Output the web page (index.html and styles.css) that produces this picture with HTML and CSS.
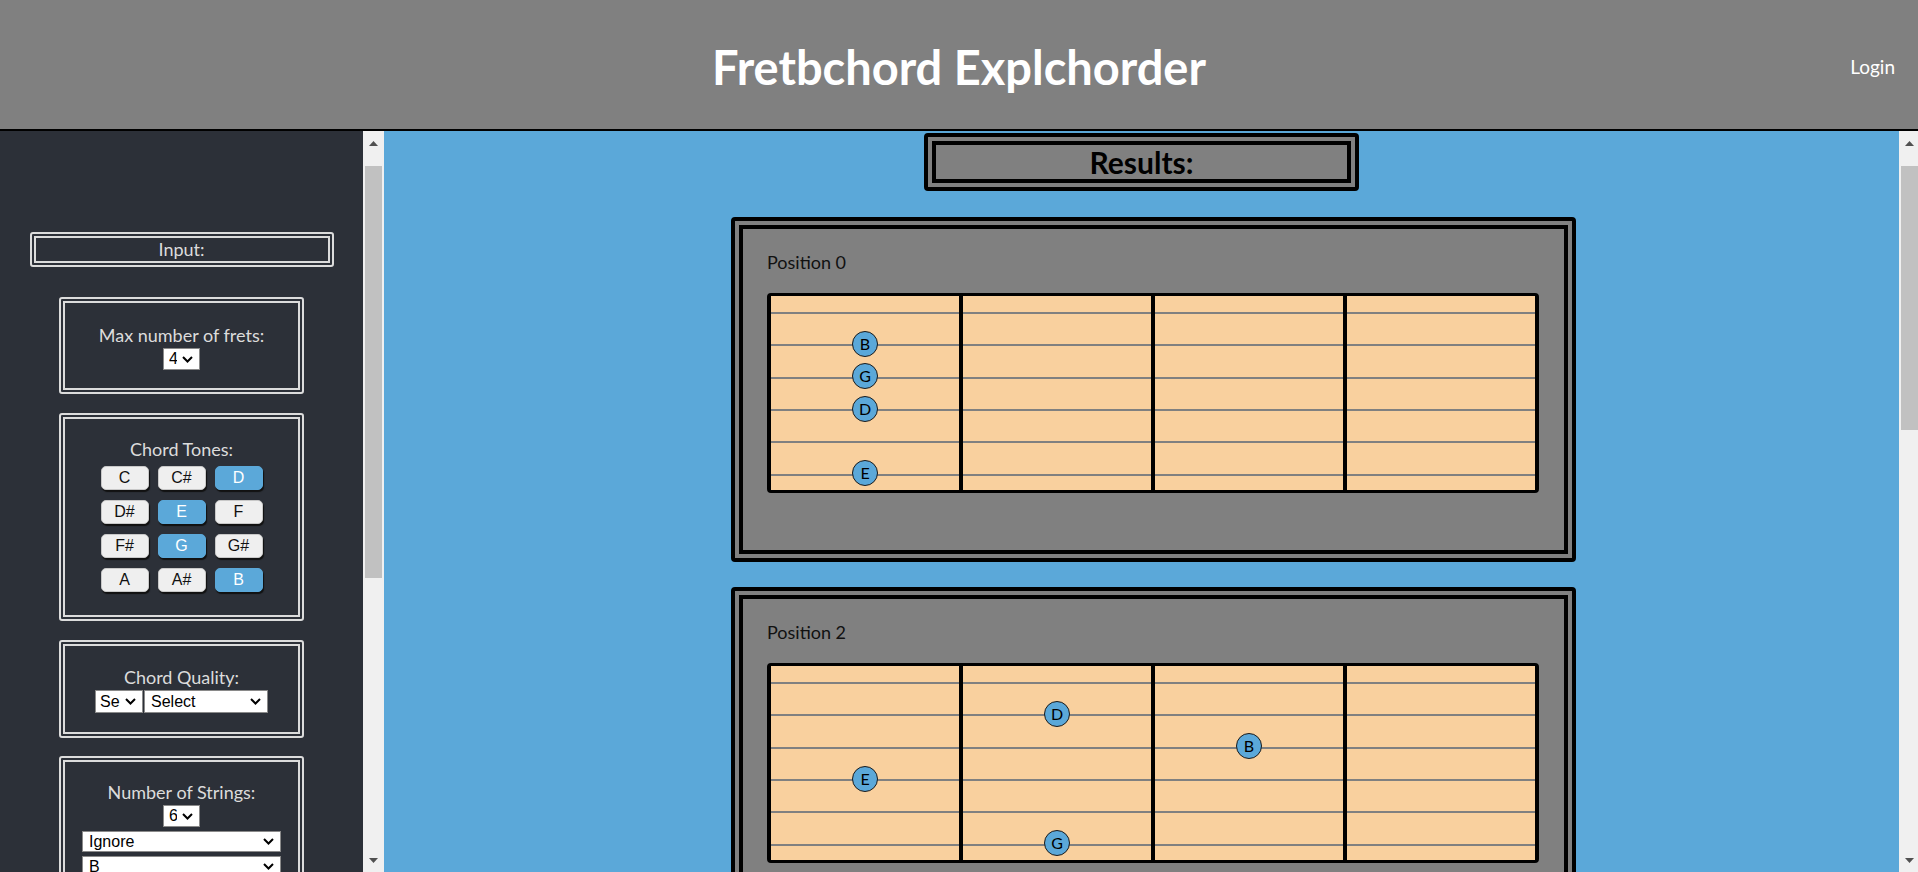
FILE: index.html
```html
<!DOCTYPE html>
<html lang="en">
<head>
<meta charset="utf-8">
<title>Fretbchord Explchorder</title>
<link rel="stylesheet" href="styles.css">
</head>
<body>
<header class="topbar">
  <div class="topbar-side"></div>
  <h1 class="app-title">Fretbchord Explchorder</h1>
  <div class="topbar-side topbar-right"><a class="login" href="#">Login</a></div>
</header>
<div class="layout">
  <aside class="sidebar">
    <div class="panel-title">Input:</div>

    <div class="box">
      <div class="label">Max number of frets:</div>
      <select class="sel sel-small"><option>4</option></select>
    </div>

    <div class="box box-tones">
      <div class="label">Chord Tones:</div>
      <div class="tones">
        <button class="tone">C</button>
        <button class="tone">C#</button>
        <button class="tone on">D</button>
        <button class="tone">D#</button>
        <button class="tone on">E</button>
        <button class="tone">F</button>
        <button class="tone">F#</button>
        <button class="tone on">G</button>
        <button class="tone">G#</button>
        <button class="tone">A</button>
        <button class="tone">A#</button>
        <button class="tone on">B</button>
      </div>
    </div>

    <div class="box box-quality">
      <div class="label">Chord Quality:</div>
      <div class="sel-row">
        <select class="sel sel-root"><option>Select</option></select>
        <select class="sel sel-quality"><option>Select</option></select>
      </div>
    </div>

    <div class="box box-strings">
      <div class="label">Number of Strings:</div>
      <select class="sel sel-small"><option>6</option></select>
      <select class="sel sel-string"><option>Ignore</option></select>
      <select class="sel sel-string"><option>B</option></select>
      <select class="sel sel-string"><option>G</option></select>
      <select class="sel sel-string"><option>D</option></select>
      <select class="sel sel-string"><option>A</option></select>
      <select class="sel sel-string"><option>E</option></select>
    </div>

    <div class="box">
      <div class="label">Tuning:</div>
      <select class="sel sel-string"><option>Standard</option></select>
    </div>

    <div class="box">
      <div class="label">Search:</div>
      <button class="submit">Submit</button>
    </div>
  </aside>

  <div class="vscroll vscroll-side">
    <div class="vs-btn"><svg width="9" height="5" viewBox="0 0 9 5"><path d="M0 5L4.5 0L9 5z" fill="#505050"/></svg></div>
    <div class="vs-track"><div class="vs-thumb thumb-side"></div></div>
    <div class="vs-btn"><svg width="9" height="5" viewBox="0 0 9 5"><path d="M0 0L4.5 5L9 0z" fill="#505050"/></svg></div>
  </div>

  <main class="main">
    <div class="results-title">Results:</div>
    <div class="cards">
      <section class="card">
        <div class="pos">Position 0</div>
        <div class="board">
          <div class="fret">
            <div class="str"></div>
            <div class="str"><span class="note">B</span></div>
            <div class="str"><span class="note">G</span></div>
            <div class="str"><span class="note">D</span></div>
            <div class="str"></div>
            <div class="str"><span class="note">E</span></div>
          </div>
          <div class="fret"><div class="str"></div><div class="str"></div><div class="str"></div><div class="str"></div><div class="str"></div><div class="str"></div></div>
          <div class="fret"><div class="str"></div><div class="str"></div><div class="str"></div><div class="str"></div><div class="str"></div><div class="str"></div></div>
          <div class="fret"><div class="str"></div><div class="str"></div><div class="str"></div><div class="str"></div><div class="str"></div><div class="str"></div></div>
        </div>
      </section>

      <section class="card">
        <div class="pos">Position 2</div>
        <div class="board">
          <div class="fret">
            <div class="str"></div><div class="str"></div><div class="str"></div>
            <div class="str"><span class="note">E</span></div>
            <div class="str"></div><div class="str"></div>
          </div>
          <div class="fret">
            <div class="str"></div>
            <div class="str"><span class="note">D</span></div>
            <div class="str"></div><div class="str"></div><div class="str"></div>
            <div class="str"><span class="note">G</span></div>
          </div>
          <div class="fret">
            <div class="str"></div><div class="str"></div>
            <div class="str"><span class="note">B</span></div>
            <div class="str"></div><div class="str"></div><div class="str"></div>
          </div>
          <div class="fret"><div class="str"></div><div class="str"></div><div class="str"></div><div class="str"></div><div class="str"></div><div class="str"></div></div>
        </div>
      </section>

      <section class="card">
        <div class="pos">Position 4</div>
        <div class="board">
          <div class="fret"><div class="str"></div><div class="str"></div><div class="str"></div><div class="str"></div><div class="str"></div><div class="str"></div></div>
          <div class="fret">
            <div class="str"></div><div class="str"></div><div class="str"></div>
            <div class="str"><span class="note">G</span></div>
            <div class="str"></div><div class="str"></div>
          </div>
          <div class="fret">
            <div class="str"><span class="note">B</span></div>
            <div class="str"><span class="note">D</span></div>
            <div class="str"></div><div class="str"></div><div class="str"></div><div class="str"></div>
          </div>
          <div class="fret">
            <div class="str"></div><div class="str"></div>
            <div class="str"><span class="note">E</span></div>
            <div class="str"></div><div class="str"></div><div class="str"></div>
          </div>
        </div>
      </section>
    </div>
  </main>

  <div class="vscroll vscroll-main">
    <div class="vs-btn"><svg width="9" height="5" viewBox="0 0 9 5"><path d="M0 5L4.5 0L9 5z" fill="#505050"/></svg></div>
    <div class="vs-track"><div class="vs-thumb thumb-main"></div></div>
    <div class="vs-btn"><svg width="9" height="5" viewBox="0 0 9 5"><path d="M0 0L4.5 5L9 0z" fill="#505050"/></svg></div>
  </div>
</div>
</body>
</html>
```
FILE: styles.css
```css
* { box-sizing: border-box; }

html, body {
  margin: 0;
  padding: 0;
  height: 100%;
}

body {
  display: flex;
  flex-direction: column;
  overflow: hidden;
  font-family: Lato, "Open Sans", "DejaVu Sans", sans-serif;
  background: #5ba8d9;
}

/* ---------- header ---------- */
.topbar {
  flex: 0 0 131px;
  display: grid;
  grid-template-columns: 1fr auto 1fr;
  align-items: center;
  padding-top: 4px;
  background: #808080;
  border-bottom: 2px solid #000;
}

.app-title {
  margin: 0;
  color: #fff;
  font-size: 47px;
  font-weight: 700;
  line-height: 56px;
}

.topbar-right {
  display: flex;
  justify-content: flex-end;
  padding-right: 23px;
}

.login {
  color: #fff;
  text-decoration: none;
  font-size: 19px;
  line-height: 22px;
}

/* ---------- layout ---------- */
.layout {
  flex: 1;
  display: flex;
  min-height: 0;
}

.sidebar {
  flex: 0 0 363px;
  overflow: hidden;
  background: #2c3038;
  padding-top: 101px;
  display: flex;
  flex-direction: column;
  align-items: center;
}

.main {
  flex: 1;
  min-width: 0;
  overflow: hidden;
  background: #5ba8d9;
  display: flex;
  flex-direction: column;
  align-items: center;
  padding-top: 2px;
}

/* drawn scrollbars */
.vscroll {
  display: flex;
  flex-direction: column;
  background: #f0f0f0;
}

.vscroll-side { flex: 0 0 21px; }
.vscroll-main { flex: 0 0 19px; padding-left: 2px; }

.vs-btn {
  flex: 0 0 24px;
  display: flex;
  align-items: center;
  justify-content: center;
}

.vs-track {
  flex: 1;
  padding-top: 11px;
}

.vs-thumb { background: #c1c1c1; }
.thumb-side { height: 412px; margin: 0 2px; }
.thumb-main { height: 264px; }

/* ---------- sidebar ---------- */
.panel-title {
  flex: none;
  width: 304px;
  height: 35px;
  border: 6px double #dcdcdc;
  border-radius: 3px;
  color: #dcdcdc;
  font-size: 18px;
  line-height: 23px;
  text-align: center;
  margin-bottom: 30px;
}

.box {
  flex: none;
  width: 245px;
  border: 6px double #dcdcdc;
  border-radius: 3px;
  padding: 21px 10px 18px;
  margin-bottom: 19px;
  display: flex;
  flex-direction: column;
  align-items: center;
}

.label {
  color: #dcdcdc;
  font-size: 18px;
  line-height: 22px;
  margin-bottom: 2px;
  white-space: nowrap;
}

.box-tones { padding: 19px 10px 23px; }
.box-tones .label { margin-bottom: 6px; }
.box-quality { padding: 20px 10px 19px; margin-bottom: 18px; }
.box-strings { padding-top: 19px; }

.tones {
  display: grid;
  grid-template-columns: repeat(3, 48px);
  grid-auto-rows: 24px;
  column-gap: 9px;
  row-gap: 10px;
}

.tone {
  margin: 0;
  padding: 0;
  border: 1px solid #c8c8c8;
  border-radius: 5px;
  background: #efefef;
  color: #111;
  font-family: "Liberation Sans", Arial, sans-serif;
  font-size: 16px;
  line-height: 20px;
  box-shadow: 1px 2px 1px #111;
}

.tone.on {
  background: #5ba8d9;
  border-color: #5ba8d9;
  color: #fff;
}

.sel {
  -webkit-appearance: none;
  appearance: none;
  height: 22px;
  margin: 0;
  color: #000;
  border: 1px solid #8a8a8a;
  border-radius: 0;
  font-family: "Liberation Sans", Arial, sans-serif;
  font-size: 16px;
  line-height: 20px;
  padding: 0 22px 0 4px;
  background: #fff url("data:image/svg+xml,%3Csvg xmlns='http://www.w3.org/2000/svg' width='11' height='7' viewBox='0 0 11 7'%3E%3Cpath d='M1 1l4.5 4.5L10 1' fill='none' stroke='%23000' stroke-width='2'/%3E%3C/svg%3E") no-repeat right 6px center;
}

.sel-small { width: 37px; padding-left: 5px; }

.sel-row {
  display: flex;
  gap: 1px;
}

.sel-root { width: 48px; height: 23px; }
.sel-quality { width: 124px; height: 23px; padding-left: 6px; }

.sel-string {
  width: 199px;
  height: 21px;
  margin-top: 4px;
  padding-left: 6px;
}

.submit {
  margin-top: 2px;
  padding: 2px 14px;
  border: 1px solid #c8c8c8;
  border-radius: 4px;
  background: #efefef;
  font-family: "Liberation Sans", Arial, sans-serif;
  font-size: 16px;
  box-shadow: 1px 2px 1px #111;
}

/* ---------- results ---------- */
.results-title {
  flex: none;
  width: 435px;
  height: 58px;
  border: 12px double #000;
  border-radius: 4px;
  background: #808080;
  color: #000;
  font-size: 30px;
  font-weight: 700;
  line-height: 34px;
  text-align: center;
}

.cards {
  flex: none;
  margin-top: 26px;
  padding-left: 24px;
  display: flex;
  flex-direction: column;
  gap: 25px;
}

.card {
  width: 845px;
  height: 345px;
  border: 12px double #000;
  border-radius: 4px;
  background: #808080;
  padding: 23px 25px 0 24px;
}

.pos {
  color: #111;
  font-size: 18px;
  line-height: 20px;
}

.board {
  margin-top: 21px;
  width: 772px;
  height: 200px;
  display: grid;
  grid-template-columns: 188px 192px 192px 192px;
  border: solid #000;
  border-width: 3px 4px;
  border-radius: 4px;
  background: #f9d09e;
}

.fret {
  display: flex;
  flex-direction: column;
}

.fret + .fret { border-left: 4px solid #000; }

.str {
  flex: 1;
  display: flex;
  align-items: center;
  justify-content: center;
  background: linear-gradient(#808080, #808080) no-repeat 0 16px / 100% 2px;
}

.note {
  width: 26px;
  height: 26px;
  margin-top: -1px;
  border-radius: 50%;
  border: 1px solid #1a1a1a;
  background: #5ba8d9;
  color: #000;
  font-size: 16px;
  line-height: 24px;
  text-align: center;
}
```
